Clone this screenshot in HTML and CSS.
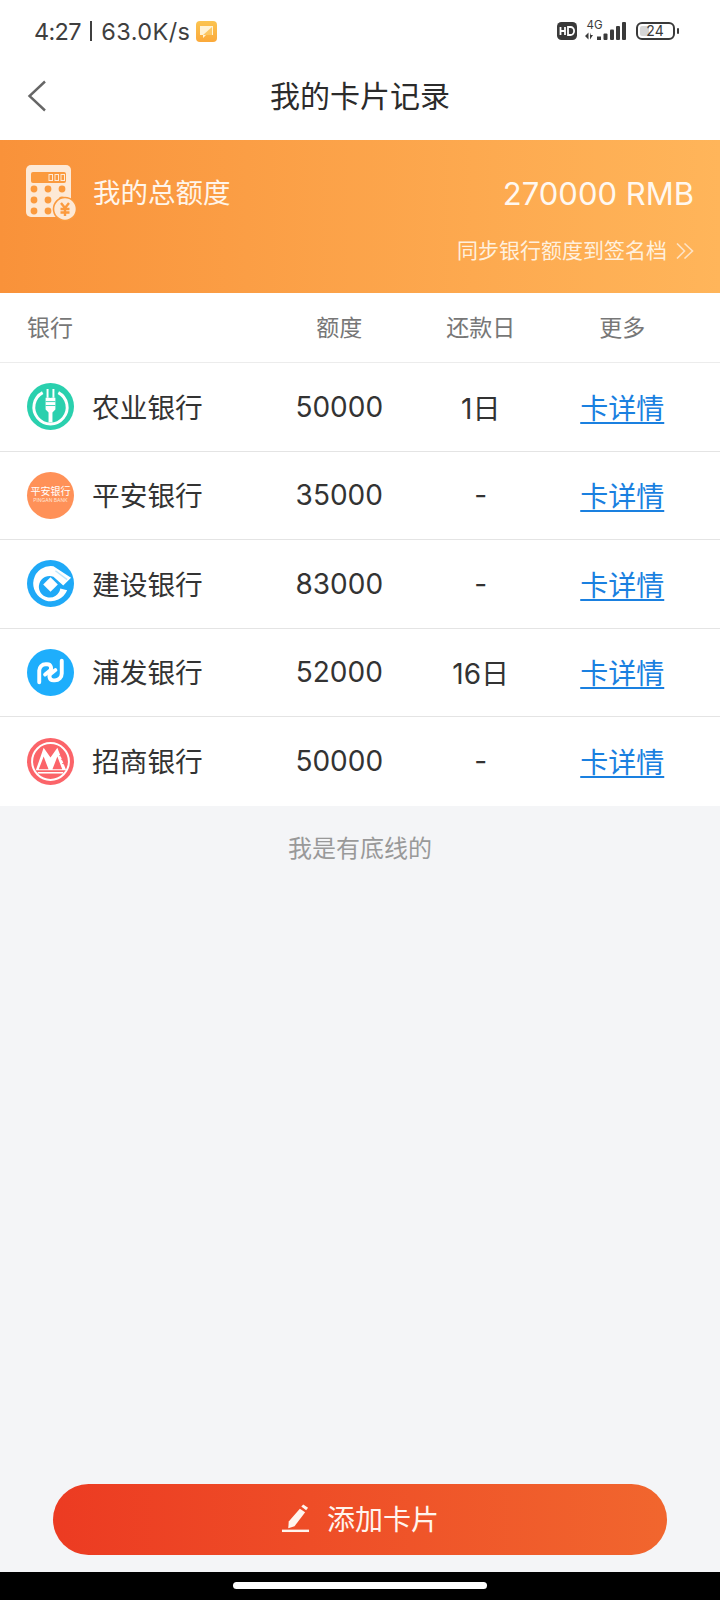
FILE: index.html
```html
<!DOCTYPE html>
<html lang="zh-CN">
<head>
<meta charset="utf-8">
<title>我的卡片记录</title>
<link rel="stylesheet" href="styles.css">
</head>
<body>
<div class="page">
  <div class="status">
    <div class="status-left">
      <span class="status-time">4:27</span>
      <span class="status-sep"></span>
      <span class="status-speed">63.0K/s</span>
      <svg class="notif" viewBox="0 0 21 21"><defs><linearGradient id="ng" x1="0" y1="0" x2="0" y2="1"><stop offset="0" stop-color="#fbc451"/><stop offset="1" stop-color="#fba93a"/></linearGradient></defs><rect width="21" height="21" rx="4" fill="url(#ng)"/><path d="M4 5h13v9h-7l-3 3v-3H4z" fill="#fff3d6"/><path d="M7 14l9-8v8z" fill="#fcc763"/></svg>
    </div>
    <div class="status-right">
      <svg class="hd" viewBox="0 0 20 18"><rect width="20" height="18" rx="4.500" fill="#3a3a3a"/><path d="M3.500 5v8M3.500 9h4.500M8 5v8M11 5v8h2.500a3.600 4 0 0 0 0-8z" fill="none" stroke="#fff" stroke-width="1.800"/></svg>
      <div class="net">
        <span class="net-label">4G</span>
        <svg class="signal" viewBox="0 0 41 18">
          <path d="M3.500 10.500v7L0 14zM5 10.500v7l3-4.500H5.800z" fill="#3a3a3a"/>
          <rect x="12" y="14.500" width="4" height="3.500" fill="#3a3a3a"/>
          <rect x="18.500" y="11.500" width="4" height="6.500" rx="1" fill="#3a3a3a"/>
          <rect x="25" y="7.500" width="4" height="10.500" rx="1" fill="#3a3a3a"/>
          <rect x="31" y="4" width="4" height="14" rx="1" fill="#3a3a3a"/>
          <rect x="37" y="0" width="4" height="18" rx="1" fill="#3a3a3a"/>
        </svg>
      </div>
      <div class="battery"><span class="battery-fill"></span><span class="battery-num">24</span></div>
      <span class="battery-tip"></span>
    </div>
  </div>

  <div class="nav">
    <svg class="back" viewBox="0 0 20 32"><path d="M18 1.500 2.500 16 18 30.500" fill="none" stroke="#666" stroke-width="2.400"/></svg>
    <div class="title">我的卡片记录</div>
  </div>

  <div class="banner">
    <div class="banner-top">
      <div class="banner-left">
        <svg class="calc" viewBox="0 0 50 56">
          <rect x="0" y="0" width="45" height="52" rx="5" fill="#fde9d6"/>
          <rect x="5" y="7" width="35" height="11" rx="2" fill="#fb9a3d"/>
          <g fill="#fb9a3d"><circle cx="8" cy="24" r="3.400"/><circle cx="22" cy="24" r="3.400"/><circle cx="36" cy="24" r="3.400"/><circle cx="8" cy="35" r="3.400"/><circle cx="22" cy="35" r="3.400"/><circle cx="36" cy="35" r="3.400"/><circle cx="8" cy="46" r="3.400"/><circle cx="22" cy="46" r="3.400"/></g>
          <g fill="none" stroke="#fde9d6" stroke-width="1"><rect x="23" y="9.500" width="3.500" height="6"/><rect x="29" y="9.500" width="3.500" height="6"/><rect x="35" y="9.500" width="3.500" height="6"/></g>
          <circle cx="39" cy="44" r="11.500" fill="#fde9d6" stroke="#fb9a3d" stroke-width="1.600"/>
          <path d="M35 38l4 5 4-5M34.500 44h9M34.500 47.500h9M39 43v8" fill="none" stroke="#fb9a3d" stroke-width="2.400"/>
        </svg>
        <span class="banner-label">我的总额度</span>
      </div>
      <span class="banner-total">270000 RMB</span>
    </div>
    <div class="banner-sync">
      <span>同步银行额度到签名档</span>
      <svg class="chev" viewBox="0 0 18 16"><path d="M1 .5 8.500 8 1 15.500M8.500 .5 16.500 8l-8 7.500" fill="none" stroke="#fde2c4" stroke-width="1.600"/></svg>
    </div>
  </div>

  <div class="table">
    <div class="row head">
      <span>银行</span><span class="c">额度</span><span class="c">还款日</span><span class="c">更多</span>
    </div>
    <div class="row item">
      <div class="bank">
        <svg class="logo" viewBox="0 0 48 48"><circle cx="24" cy="24" r="24" fill="#2ad0ae"/><path d="M16 9.800a17 17 0 1 0 16 0" fill="none" stroke="#fff" stroke-width="3"/><path d="M20 6h2v9h-2zM26 6h2v9h-2z" fill="#fff"/><path d="M19 15h10v12l-3 3v10h-4V30l-3-3z" fill="#fff"/><path d="M19 19h10M19 23h10M24 10v5" stroke="#2ad0ae" stroke-width=".9"/></svg>
        <span class="bank-name">农业银行</span>
      </div>
      <span class="c">50000</span><span class="c">1日</span><a class="c link">卡详情</a>
    </div>
    <div class="row item">
      <div class="bank">
        <div class="pingan"><span class="pa-cn">平安银行</span><span class="pa-en">PINGAN BANK</span></div>
        <span class="bank-name">平安银行</span>
      </div>
      <span class="c">35000</span><span class="c">-</span><a class="c link">卡详情</a>
    </div>
    <div class="row item">
      <div class="bank">
        <svg class="logo" viewBox="0 0 48 48"><circle cx="24" cy="24" r="24" fill="#1fa9f7"/><path d="M41 31A18 18 0 1 1 27 6.300L45 18l-8 8-10-9A11 11 0 1 0 34 29z" fill="#fff"/><path d="M24 17.500 31.500 25 24 32.500 16.500 25z" fill="#fff"/><path d="M29 11l12 9" stroke="#bfe6fd" stroke-width="1.500"/></svg>
        <span class="bank-name">建设银行</span>
      </div>
      <span class="c">83000</span><span class="c">-</span><a class="c link">卡详情</a>
    </div>
    <div class="row item">
      <div class="bank">
        <svg class="logo" viewBox="0 0 48 48"><circle cx="24" cy="24" r="24" fill="#1eaefc"/><g fill="none" stroke="#fff" stroke-width="4" stroke-linecap="round"><path d="M12.500 34V22a6.500 6.500 0 0 1 6.500-6.500h1.500a4 4 0 0 1 2 7.500l-4 3"/><path d="M35.500 12v13a7 7 0 0 1-7 7h-1.500a4 4 0 0 1-2-7.500l4-3"/></g></svg>
        <span class="bank-name">浦发银行</span>
      </div>
      <span class="c">52000</span><span class="c">16日</span><a class="c link">卡详情</a>
    </div>
    <div class="row item">
      <div class="bank">
        <svg class="logo" viewBox="0 0 48 48"><circle cx="24" cy="24" r="24" fill="#fb6469"/><circle cx="24" cy="24" r="18.800" fill="none" stroke="#fff" stroke-width="2"/><path d="M9 33 17 10l7 10 7-10 9 23z" fill="#fff"/><path d="M17 19 12 32h10zM31 19l-5 13h10z" fill="#fb6469"/><path d="M33 18l6 1M35 22l5 1M36 26l5 1" stroke="#fb6469" stroke-width="1"/><path d="M11 35.500h26" stroke="#fff" stroke-width="1.600"/></svg>
        <span class="bank-name">招商银行</span>
      </div>
      <span class="c">50000</span><span class="c">-</span><a class="c link">卡详情</a>
    </div>
  </div>

  <div class="main">
    <div class="end">我是有底线的</div>
    <div class="add">
      <svg class="pen" viewBox="0 0 30 30"><path d="M19.500 5l5.500 3.500-11 14.500-6.500 2 .5-7z" fill="#fff5ee"/><path d="M21 2.500l2-2 5 3.500-2 2.500z" fill="#fff5ee"/><rect x="1" y="26.500" width="28" height="2.500" fill="#fff5ee"/></svg>
      <span>添加卡片</span>
    </div>
  </div>

  <div class="gesture"><span class="gesture-bar"></span></div>
</div>
</body>
</html>
```

FILE: styles.css
```css
* { box-sizing: border-box; }
html, body { margin: 0; padding: 0; }
body {
  width: 720px;
  height: 1600px;
  font-family: Inter, "Noto Sans CJK SC", sans-serif;
  color: #333;
  background: #f4f5f7;
  overflow: hidden;
}
.page { width: 720px; height: 1600px; display: flex; flex-direction: column; }

.status {
  height: 62px;
  background: #fff;
  display: flex;
  align-items: center;
  justify-content: space-between;
  padding: 0 41px 0 34px;
}
.status-left { display: flex; align-items: center; font-size: 23.500px; color: #3f3f3f; }
.status-time { letter-spacing: -.7px; }
.status-speed { letter-spacing: .4px; }
.status-sep { width: 2.500px; height: 20px; background: #3f3f3f; margin: 0 9px; }
.notif { width: 21px; height: 21px; margin-left: 6px; }
.status-right { display: flex; align-items: center; }
.hd { width: 20px; height: 18px; margin-right: 8px; }
.net { position: relative; width: 41px; height: 18px; margin-right: 10px; }
.net-label { position: absolute; left: 2px; top: -3px; font-size: 11.500px; line-height: 12px; color: #3a3a3a; }
.signal { display: block; width: 41px; height: 18px; }
.battery {
  position: relative;
  width: 39px;
  height: 18px;
  border: 2px solid #3a3a3a;
  border-radius: 6px;
  display: flex;
  align-items: center;
  justify-content: center;
}
.battery-fill { position: absolute; left: 2px; top: 2px; bottom: 2px; width: 9px; background: #d6d6d6; border-radius: 2px; }
.battery-num { position: relative; font-size: 14px; line-height: 14px; color: #3a3a3a; }
.battery-tip { width: 2.500px; height: 6px; margin-left: 2px; background: #3a3a3a; border-radius: 1px; }

.nav {
  position: relative;
  height: 78px;
  padding-bottom: 11px;
  background: #fff;
  display: flex;
  align-items: center;
  justify-content: center;
}
.back { position: absolute; left: 27px; top: 18px; width: 20px; height: 32px; }
.title { font-size: 30px; color: #2b2b2b; line-height: 40px; }

.banner {
  height: 153px;
  padding: 25px 26px 0;
  color: #fff;
  background: linear-gradient(90deg, #f9923a, #ffb55a);
}
.banner-top { display: flex; justify-content: space-between; align-items: flex-start; }
.banner-left { display: flex; align-items: center; gap: 17px; }
.calc { width: 50px; height: 56px; }
.banner-label { font-size: 27.500px; color: #fff5ea; margin-top: -4px; }
.banner-total { font-size: 31px; line-height: 44px; color: #fff8f0; margin-top: 7px; }
.banner-sync {
  display: flex;
  justify-content: flex-end;
  align-items: center;
  gap: 9px;
  margin-top: 14px;
  font-size: 21px;
  line-height: 32px;
  color: #fff0de;
}
.chev { width: 18px; height: 16px; }

.table { background: #fff; }
.row {
  display: grid;
  grid-template-columns: 1fr repeat(3, 141.500px);
  align-items: center;
  padding: 0 27px;
}
.c { text-align: center; }
.head { height: 70px; font-size: 23px; color: #777; border-bottom: 1px solid #ececec; padding-bottom: 3px; }
.item { height: 88.500px; font-size: 28px; color: #333; border-bottom: 1px solid #e4e4e4; }
.item:last-child { border-bottom: 0; }
.bank { display: flex; align-items: center; gap: 18px; }
.bank-name { font-size: 27.700px; margin-top: -2px; }
.logo { width: 47px; height: 47px; flex: none; }
.link { font-size: 28px; color: #1a80e0; text-decoration: underline; text-underline-offset: 3px; text-decoration-thickness: 2px; }
.pingan {
  width: 47px;
  height: 47px;
  flex: none;
  border-radius: 50%;
  background: #ff9158;
  color: #fff;
  display: flex;
  flex-direction: column;
  align-items: center;
  justify-content: center;
}
.pa-cn { font-size: 10px; line-height: 11px; white-space: nowrap; }
.pa-en { font-size: 5px; line-height: 7px; white-space: nowrap; color: #ffe3d2; }

.main { flex: 1; display: flex; flex-direction: column; align-items: center; }
.end { margin-top: 26px; font-size: 24px; line-height: 34px; color: #999; }
.add {
  width: 614px;
  height: 71px;
  margin-top: auto;
  margin-bottom: 17px;
  padding-bottom: 3px;
  border-radius: 36px;
  background: linear-gradient(90deg, #ec3b22, #f1662e);
  color: #fff5ee;
  font-size: 28px;
  display: flex;
  align-items: center;
  justify-content: center;
  gap: 17px;
}
.pen { width: 29px; height: 29px; }

.gesture { height: 28px; background: #000; display: flex; justify-content: center; padding-top: 10px; }
.gesture-bar { width: 254px; height: 7px; background: #fff; border-radius: 4px; }
```
